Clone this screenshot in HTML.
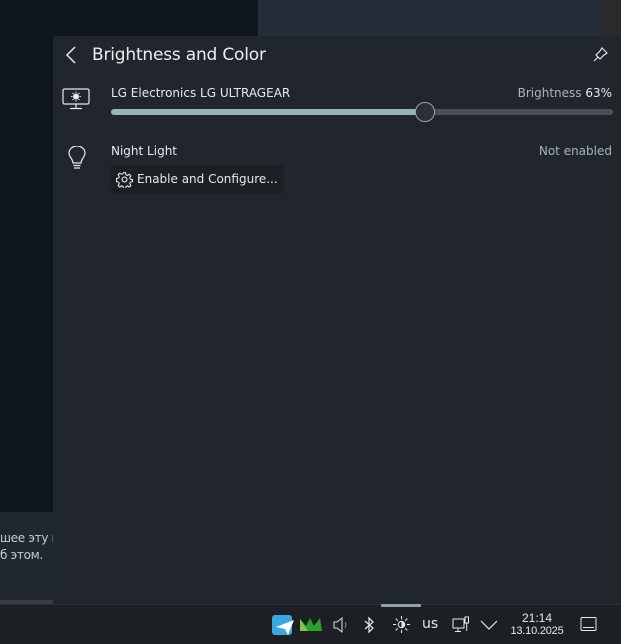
<!DOCTYPE html>
<html><head><meta charset="utf-8"><style>
*{margin:0;padding:0;box-sizing:border-box}
body{width:621px;height:644px;overflow:hidden;background:#0f1620;font-family:"Liberation Sans","DejaVu Sans",sans-serif;position:relative;color:#e6e9ec}
.abs{position:absolute}
</style></head><body>
<div class="abs" style="left:258px;top:0;width:344px;height:36px;background:#232d37"></div>
<div class="abs" style="left:602px;top:0;width:19px;height:36px;background:#2a2a2c"></div>
<div class="abs" style="left:0;top:512px;width:53px;height:92px;background:#20272f"></div>
<div class="abs" style="left:0;top:600px;width:53px;height:4px;background:#3a3d40"></div>
<div class="abs" style="left:0;top:530px;font-size:12px;line-height:17px;color:#c8ccd0;white-space:nowrap;font-family:'DejaVu Sans',sans-serif;letter-spacing:-0.3px">шее эту и<br>б этом.</div>
<div class="abs" style="left:53px;top:36px;width:568px;height:568px;background:#20262c;border-radius:3px 0 0 0"></div>
<svg class="abs" style="left:63px;top:45px" width="16" height="20" viewBox="0 0 16 20"><path d="M12 2 L4 10 L12 18" stroke="#e6e9ec" stroke-width="1.5" fill="none"/></svg>
<div class="abs" style="left:92px;top:45px;font-size:17px;font-family:'DejaVu Sans',sans-serif;color:#eceff1;letter-spacing:-0.2px">Brightness and Color</div>
<svg class="abs" style="left:593px;top:46px" width="16" height="16" viewBox="0 0 16 16"><path d="M9 2 L14 7 L11 9 L7 13 L3 9 L7 5 Z M5 11 L1 15" stroke="#e0e3e6" stroke-width="1.2" fill="none"/></svg>
<svg class="abs" style="left:62px;top:88px" width="30" height="24" viewBox="0 0 30 24"><rect x="1" y="1" width="26" height="15" rx="1.5" stroke="#e6e9ec" stroke-width="1.2" fill="none"/><path d="M14 16 V20 M8 20.5 H20" stroke="#e6e9ec" stroke-width="1.2"/><circle cx="14" cy="8.5" r="3" fill="#e6e9ec"/><path d="M14 3.5v1.5M14 12v1.5M9 8.5h1.5M17.5 8.5H19M10.5 5l1 1M16.5 11l1 1M10.5 12l1-1M16.5 6l1-1" stroke="#e6e9ec" stroke-width="1"/></svg>
<div class="abs" style="left:111px;top:86px;font-size:12px;font-family:'DejaVu Sans',sans-serif;color:#e6e9ec">LG Electronics LG ULTRAGEAR</div>
<div class="abs" style="right:9px;top:86px;font-size:12px;font-family:'DejaVu Sans',sans-serif;color:#aab3ba">Brightness <span style="color:#e6e9ec">63%</span></div>
<div class="abs" style="left:111px;top:109px;width:502px;height:6px;border-radius:3px;background:#4b5156"></div>
<div class="abs" style="left:111px;top:109px;width:314px;height:6px;border-radius:3px;background:#93b8b4"></div>
<div class="abs" style="left:415px;top:102px;width:20px;height:20px;border-radius:50%;background:#2a3035;border:1px solid #9aa3a8"></div>
<svg class="abs" style="left:67px;top:146px" width="20" height="26" viewBox="0 0 20 26"><path d="M6 17 C6 13 2 11 2 7 A8 7 0 0 1 18 7 C18 11 14 13 14 17 Z" stroke="#e6e9ec" stroke-width="1.2" fill="none"/><path d="M6.5 19.5H13.5M7 22H13" stroke="#e6e9ec" stroke-width="1.2"/></svg>
<div class="abs" style="left:111px;top:144px;font-size:12px;font-family:'DejaVu Sans',sans-serif;color:#e6e9ec">Night Light</div>
<div class="abs" style="right:9px;top:144px;font-size:12px;font-family:'DejaVu Sans',sans-serif;color:#aab3ba">Not enabled</div>
<div class="abs" style="left:111px;top:165px;width:173px;height:28px;background:#1b2025;border-radius:3px"></div>
<svg class="abs" style="left:116px;top:171px" width="17" height="17" viewBox="0 0 16 16"><circle cx="8" cy="8" r="2.3" stroke="#e6e9ec" fill="none" stroke-width="1.1"/><path d="M7 1.5h2l.4 2 1.4.7 1.8-1.1 1.4 1.4-1.1 1.8.6 1.4 2 .4v2l-2 .4-.6 1.4 1.1 1.8-1.4 1.4-1.8-1.1-1.4.6-.4 2H7l-.4-2-1.4-.6-1.8 1.1-1.4-1.4 1.1-1.8-.6-1.4-2-.4V7l2-.4.6-1.4-1.1-1.8 1.4-1.4 1.8 1.1 1.4-.7z" stroke="#e6e9ec" fill="none" stroke-width="1"/></svg>
<div class="abs" style="left:137px;top:172px;font-size:12px;font-family:'DejaVu Sans',sans-serif;color:#e6e9ec">Enable and Configure...</div>
<div class="abs" style="left:0;top:604px;width:621px;height:40px;background:#1c2024;border-top:1px solid #2a3036"></div>
<div class="abs" style="left:381px;top:604px;width:40px;height:3px;background:#8fa5a9;border-radius:1px"></div>
<div class="abs" style="left:272px;top:615px;width:20px;height:20px;background:#3aa7e0;border-radius:3px"></div>
<svg class="abs" style="left:274px;top:617px" width="22" height="20" viewBox="0 0 22 20"><path d="M2 10 L20 3 L14 18 L11 12 Z" fill="#fff"/></svg>
<svg class="abs" style="left:300px;top:616px" width="22" height="16" viewBox="0 0 22 16"><path d="M0 15 L0 3 L6 10 L10 2 L14 10 L20 2 L22 15Z" fill="#2ca02c"/><path d="M0 15 L0 3 L8 15Z" fill="#8bc34a"/></svg>
<svg class="abs" style="left:332px;top:616px" width="18" height="18" viewBox="0 0 18 18"><path d="M2 6h3l5-4v14l-5-4H2z" stroke="#dde" fill="none" stroke-width="1"/><path d="M13 6q2 3 0 6" stroke="#888" fill="none"/></svg>
<svg class="abs" style="left:363px;top:616px" width="12" height="18" viewBox="0 0 12 18"><path d="M2 5 L10 12 L6 16 V2 L10 6 L2 13" stroke="#e6e9ec" fill="none" stroke-width="1.2"/></svg>
<svg class="abs" style="left:393px;top:616px" width="17" height="17" viewBox="0 0 16 16"><circle cx="8" cy="8" r="3" stroke="#e6e9ec" fill="none"/><path d="M8 5a3 3 0 0 1 0 6z" fill="#e6e9ec"/><path d="M8 0v3M8 13v3M0 8h3M13 8h3M2.5 2.5l2 2M11.5 11.5l2 2M2.5 13.5l2-2M11.5 4.5l2-2" stroke="#e6e9ec"/></svg>
<div class="abs" style="left:422px;top:616px;font-size:14px;font-family:'DejaVu Sans',sans-serif;color:#e6e9ec">us</div>
<svg class="abs" style="left:452px;top:616px" width="18" height="18" viewBox="0 0 18 18"><rect x="1" y="3" width="11" height="9" stroke="#e6e9ec" fill="none"/><path d="M6 12v3M3 15.5h6" stroke="#e6e9ec"/><rect x="13" y="1" width="3.5" height="6" stroke="#e6e9ec" fill="none"/><path d="M14.7 7v8" stroke="#e6e9ec"/></svg>
<svg class="abs" style="left:480px;top:619px" width="18" height="12" viewBox="0 0 18 12"><path d="M1 2 L9 10 L17 2" stroke="#e6e9ec" fill="none" stroke-width="1.2"/></svg>
<div class="abs" style="left:507px;top:612px;width:60px;text-align:center;font-size:12px;line-height:12px;color:#e6e9ec">21:14<br><span style="font-size:11px;letter-spacing:-0.2px">13.10.2025</span></div>
<svg class="abs" style="left:580px;top:616px" width="18" height="16" viewBox="0 0 18 16"><rect x="1" y="1.5" width="15" height="13" rx="1" stroke="#e6e9ec" fill="none"/><path d="M3 11.5h11" stroke="#e6e9ec"/></svg>
</body></html>
